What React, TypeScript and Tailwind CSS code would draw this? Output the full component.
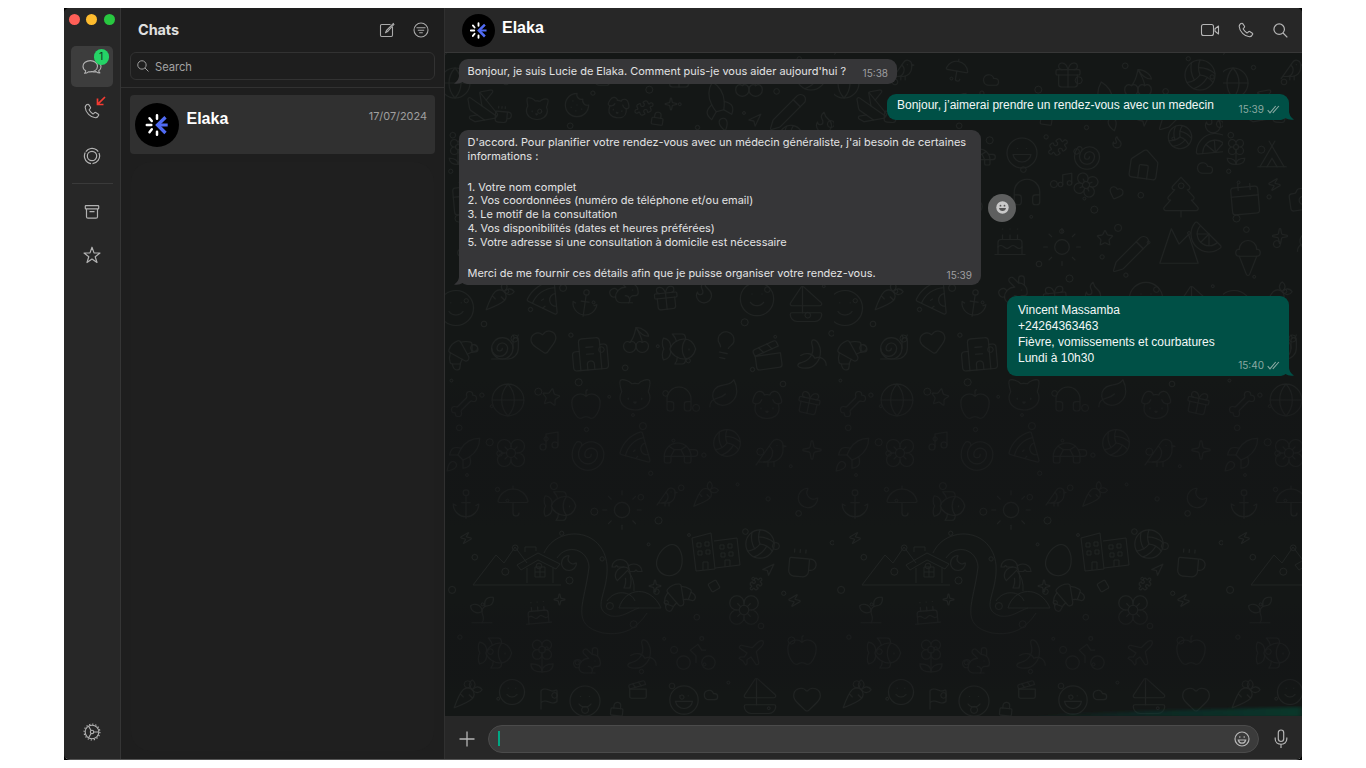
import React from "react";
import {
  Anchor, Apple, Banana, Bike, Bird, Bone, Building2, Cake, Calendar, Camera, Carrot, Cat, Cherry, Citrus,
  Clapperboard, Cloud, Coffee, Cookie, Croissant, Diamond, Dog, Egg, Fish, Flag, Flame, Flower, Flower2, Gift,
  Globe, Headphones, Heart, House, IceCreamCone, Laugh, Leaf, Lightbulb, Lock, Moon, Mountain, Music, Navigation,
  Origami, Palmtree, Pencil, Pizza, Plane, Puzzle, Rabbit, Rocket, Sailboat, Shell, Smile, Snail, Sparkle, Sprout,
  Star, Sun, Tent, TreePine, Trophy, Turtle, Umbrella, Volleyball, Zap,
} from "lucide-react";

type Doodle = [React.ElementType, number, number, number, number];

const doodles: Doodle[] = [
  [Globe, -8, 12, 36, 0], [Origami, 18, 34, 38, -10], [Coffee, 48, 52, 20, 5], [Cat, 78, 42, 28, 4],
  [Cookie, 118, 38, 28, 0], [Dog, 160, 42, 26, 10], [Puzzle, 190, 46, 18, 20], [Sparkle, 219, 44, 14, 0],
  [Lock, 205, 58, 15, 8], [Rocket, 252, 32, 44, -60], [Cherry, 288, 14, 32, 0], [Pencil, 322, 38, 42, 0],
  [Navigation, 302, 60, 15, 0], [Gift, 218, 6, 32, 0], [Cloud, 148, 18, 18, 0], [Bird, 56, 4, 26, 0],
  [Umbrella, 110, 4, 26, 10], [Flame, 366, 56, 26, 0], [Volleyball, 348, 4, 36, 0],
  [Flower2, -2, 84, 30, 0], [Tent, 32, 84, 34, 0], [Laugh, 170, 82, 36, 0], [Puzzle, 214, 84, 20, 10],
  [Shell, 238, 90, 30, 0], [Flame, 276, 82, 14, 0], [House, 292, 94, 36, 8], [Volleyball, 332, 70, 28, 12],
  [Citrus, 362, 76, 38, 130], [Trophy, 90, 80, 34, 5], [Turtle, 132, 88, 32, 0],
  [Calendar, 4, 128, 36, -5], [Zap, 44, 124, 15, 15], [Camera, 64, 130, 32, -8], [Bike, 106, 120, 46, 0],
  [Music, 222, 118, 18, 0], [Flower, 238, 118, 28, 20], [Cloud, 362, 106, 18, 0], [TreePine, 322, 118, 50, 0],
  [Headphones, 176, 122, 34, 0], [Heart, 274, 132, 16, 20],
  [IceCreamCone, 4, 184, 42, 0], [Sparkle, 48, 174, 18, 0], [Leaf, 72, 172, 30, 0], [Plane, 110, 180, 38, 0],
  [Cake, 158, 170, 36, 0], [Sun, 206, 172, 44, 0], [Star, 262, 176, 18, 0], [Pencil, 276, 180, 42, 0],
  [Mountain, 322, 170, 46, 0], [Citrus, 354, 166, 36, 0],
  [Smile, -10, 234, 42, 0], [Carrot, 38, 226, 34, 0], [Pizza, 80, 224, 38, 10], [Anchor, 124, 234, 32, 8],
  [Rabbit, 162, 220, 34, 0], [Gift, 206, 230, 30, -6], [Flame, 246, 226, 26, 0], [Smile, 292, 226, 40, 0],
  [Sailboat, 340, 230, 42, 0],
  [Croissant, 0, 284, 36, 0], [Snail, 44, 278, 32, 0], [Heart, 84, 274, 30, -10], [Building2, 124, 280, 42, -5],
  [Cherry, 176, 272, 30, 0], [Fish, 214, 276, 40, 0], [Lightbulb, 264, 276, 32, 12], [Clapperboard, 306, 286, 34, -8],
  [Banana, 350, 284, 34, 0],
  [Bone, 4, 336, 30, 0], [Globe, 44, 328, 38, 0], [Star, 96, 334, 20, 10], [Apple, 124, 334, 34, 0],
  [Cat, 170, 322, 40, 0], [Headphones, 218, 330, 32, 0], [Leaf, 262, 324, 34, 0], [Dog, 304, 334, 36, 0],
  [Gift, 350, 336, 28, 12],
  [Rocket, -2, 382, 40, 0], [Flower, 48, 382, 36, 0], [Music, 92, 376, 24, 0], [Shell, 124, 384, 38, 0],
  [Pizza, 172, 376, 36, 0], [Turtle, 216, 380, 40, 0], [Volleyball, 266, 374, 32, 0], [Bird, 308, 382, 36, 0],
  [Sparkle, 356, 386, 22, 0],
  [Anchor, 4, 434, 34, 0], [Umbrella, 50, 430, 36, 0], [Fish, 96, 434, 38, 0], [Sun, 154, 434, 46, 0],
  [Bird, 210, 432, 24, 0], [Carrot, 246, 426, 30, 0], [Moon, 350, 432, 26, 0],
  [Zap, 14, 478, 14, 15], [Moon, 114, 500, 20, 0],
  [Palmtree, 164, 502, 36, 0], [Egg, 206, 488, 38, 15], [Volleyball, 298, 474, 34, 0],
  [Coffee, 340, 494, 34, 5], [Navigation, 316, 510, 14, 0], [Sparkle, 203, 526, 14, 0],
  [Puzzle, 304, 524, 14, 0], [Diamond, 262, 526, 14, 15],
  [Sprout, 20, 540, 34, 0], [Cake, 78, 544, 30, -5], [Sparkle, 108, 540, 13, 0],
  [Croissant, 216, 528, 36, 20], [Flower, 280, 538, 38, 0], [Zap, 342, 540, 15, 15],
  [Fish, 30, 580, 40, 0], [Flower2, 78, 584, 38, 0], [Rabbit, 126, 592, 32, 0], [Banana, 180, 584, 34, 0],
  [Bike, 228, 576, 46, 0], [Plane, 290, 584, 32, 0], [Apple, 340, 580, 34, 0],
  [Smile, 52, 624, 30, 0], [Flag, 92, 634, 24, 0], [Smile, 122, 630, 36, 0], [Lock, 164, 648, 16, 6],
  [Clapperboard, 182, 626, 22, 0], [Laugh, 222, 630, 34, 0], [Cloud, 258, 634, 16, 0], [Sailboat, 294, 622, 42, 0],
  [Heart, 346, 630, 32, 0], [Carrot, 6, 624, 34, 0],
];

const dots = Array.from({ length: 140 }, (_, i) => ({
  x: (i * 83.7 + (i % 7) * 11) % 388,
  y: (i * 51.3 + (i % 5) * 7) % 664,
  r: 1.4 + (i % 4) * 0.7,
}));

function Wallpaper() {
  return (
    <svg className="absolute inset-0 h-full w-full" aria-hidden="true">
      <defs>
        <pattern id="doodles" width="389" height="664" patternUnits="userSpaceOnUse">
          <g color="#202322" fill="none" stroke="#202322">
            {doodles.map(([Icon, x, y, s, r], i) => (
              <g key={i} transform={`translate(${x} ${y}) rotate(${r} ${s / 2} ${s / 2})`}>
                <Icon size={s} strokeWidth={(1.1 * 24) / s} />
              </g>
            ))}
            {dots.map((d, i) => (
              <circle key={i} cx={d.x} cy={d.y} r={d.r} />
            ))}
            <path d="M28 532L51 502L59 510L70 494L82 510M28 532H116M72 512L93 500L115 511L111 516L93 507L76 517ZM82 515V530M108 515V530M90 514H100V524H90ZM95 514V524M90 519H100M80 499V494H91V498" />
            <path d="M99 500C112 472 158 474 162 512C164 540 145 556 166 563C178 565 184 558 194 555M112 505C122 490 143 496 144 514C140 550 124 572 158 580C180 583 192 575 202 560" />
            <path d="M162 548C170 536 186 538 190 548M174 555C180 534 206 532 216 555ZM189 538Q190 526 183 518" />
            <path d="M247 485L266 480L270 516L251 518ZM269 488L292 485L295 512L270 515M252 490h4v4h-4zM260 489h4v4h-4zM253 498h4v4h-4zM261 497h4v4h-4zM275 492h4v4h-4zM283 491h4v4h-4zM276 500h4v4h-4zM284 499h4v4h-4zM258 517V509H263V516M280 514V507H285V513" />
          </g>
        </pattern>
        <linearGradient id="tint" x1="0" x2="1">
          <stop offset="0" stopColor="#004e43" stopOpacity="0" />
          <stop offset="0.6" stopColor="#00493c" stopOpacity="0.4" />
          <stop offset="1" stopColor="#00593f" stopOpacity="0.5" />
        </linearGradient>
        <linearGradient id="shade" x1="0" y1="0" x2="0" y2="1">
          <stop offset="0" stopColor="#131416" stopOpacity="0" />
          <stop offset="0.2" stopColor="#131416" stopOpacity="0.4" />
          <stop offset="0.8" stopColor="#131416" stopOpacity="0.4" />
          <stop offset="1" stopColor="#131416" stopOpacity="0" />
        </linearGradient>
        <filter id="soft"><feGaussianBlur stdDeviation="3 1.5" /></filter>
      </defs>
      <rect width="100%" height="100%" fill="url(#doodles)" />
      <rect y="325" width="857" height="150" fill="url(#shade)" />
      <rect y="550" width="857" height="90" fill="url(#shade)" />
      <path d="M560 664L700 658L857 654V664Z" fill="url(#tint)" filter="url(#soft)" />
    </svg>
  );
}

function Logo({ size }: { size: number }) {
  return (
    <svg width={size} height={size} viewBox="0 0 44 44" className="shrink-0" fill="none">
      <circle cx="22" cy="22" r="22" fill="#000" />
      <path d="M11.800 22H16.300M22 12.300V15.700M22 28.700V31.800M14.500 15.200L16.800 18M14.500 29.200L16.800 26.300" stroke="#fff" strokeWidth="2.500" strokeLinecap="round" />
      <path d="M30.500 14.200L22.500 22L30.500 30" stroke="#506bf4" strokeWidth="3.300" />
      <path d="M22.500 22H32.700" stroke="#506bf4" strokeWidth="2.800" />
    </svg>
  );
}

function Ticks() {
  return (
    <svg width="13" height="9" viewBox="0 0 13 9" fill="none" stroke="#8aa9a2" strokeWidth="1.100">
      <path d="M.7 5.200L3 7.800L8.700 1M5.800 7.800L11.900 1" />
    </svg>
  );
}

function Tail({ side }: { side: "left" | "right" }) {
  return side === "left" ? (
    <svg width="14" height="14" viewBox="0 0 14 14" className="absolute bottom-0 -left-[5px]">
      <path d="M5 0V6Q4.500 11 0 13.500Q5 14.500 8.500 12L14 14V0Z" fill="#363638" />
    </svg>
  ) : (
    <svg width="14" height="14" viewBox="0 0 14 14" className="absolute bottom-0 -right-[5px]">
      <path d="M9 0V6Q9.500 11 14 13.500Q9 14.500 5.500 12L0 14V0Z" fill="#005046" />
    </svg>
  );
}

function Phone() {
  return (
    <svg width="16" height="16" viewBox="0 0 16 16" fill="none" stroke="currentColor" strokeWidth="1.100" strokeLinejoin="round">
      <path d="M3.700 1.300C2.500 1.700 1.200 2.900 1.200 4.500C1.500 9.300 6.600 14.400 11.400 14.800C13 14.700 14.200 13.500 14.700 12.300C14.900 11.800 14.700 11.500 14.400 11.300L11.700 9.500C11.300 9.300 10.900 9.300 10.600 9.600L9.700 10.600C9.400 10.900 9 10.900 8.700 10.700C7.300 9.800 6.200 8.700 5.300 7.300C5.100 7 5.100 6.600 5.400 6.300L6.400 5.400C6.700 5.100 6.700 4.700 6.500 4.300L4.700 1.600C4.500 1.300 4.200 1.100 3.700 1.300Z" />
    </svg>
  );
}

function Search({ size }: { size: number }) {
  return (
    <svg width={size} height={size} viewBox="0 0 16 16" fill="none" stroke="currentColor" strokeWidth="1.300">
      <circle cx="6.600" cy="6.600" r="5.600" />
      <path d="M10.700 10.700L15.300 15.300" />
    </svg>
  );
}

function Sidebar() {
  return (
    <aside className="flex w-[57px] shrink-0 flex-col items-center border-r border-[#353535] bg-[#272727] text-[#b2b2b2]">
      <div className="flex w-full gap-[6.300px] pt-[6px] pl-[5px]">
        <span className="size-[11px] rounded-full bg-[#ff5f57]" />
        <span className="size-[11px] rounded-full bg-[#febc2e]" />
        <span className="size-[11px] rounded-full bg-[#28c840]" />
      </div>
      <div className="relative mt-[21px] flex h-[41px] w-[42px] items-center justify-center rounded-[5px] bg-[#3d3d3d]">
        <svg width="20" height="16" viewBox="0 0 20 16" fill="none" stroke="currentColor" strokeWidth="1.100" strokeLinejoin="round">
          <path d="M8.300 1.600C4.200 1.600 1 4.100 1 7.200C1 9.200 2 10.800 3.700 11.800C3.700 12.900 3.200 13.700 2.500 14.300C4.100 14.300 5.500 13.700 6.400 12.800C11.600 13.400 15.500 11 15.500 7.200C15.500 4.100 12.300 1.600 8.300 1.600Z" />
          <path d="M15 3.200C17.500 4 19 5.600 19 7.700C19 9.400 18.100 10.900 16.700 11.700C16.800 12.800 17.300 13.500 17.900 14C16.400 14 15 13.500 14.100 12.600C12.400 13 10.300 12.900 8.800 12.500" />
        </svg>
        <span className="absolute top-[3px] left-[22.500px] flex size-[15.500px] items-center justify-center rounded-full bg-[#25d366] font-[Inter,sans-serif] text-[10.500px] leading-none text-[#10391f]">1</span>
      </div>
      <div className="relative mt-[16px] flex h-[16px] justify-center">
        <Phone />
        <svg width="10" height="10" viewBox="0 0 10 10" fill="none" stroke="#f43b32" strokeWidth="1.700" className="absolute -top-[7px] left-[12px]">
          <path d="M9 1L1.600 8.400M1.500 2.500V8.500H7.500" />
        </svg>
      </div>
      <svg className="mt-[28px]" width="18" height="18" viewBox="0 0 18 18" fill="none" stroke="currentColor" strokeWidth="1.200">
        <circle cx="9" cy="9" r="4.700" />
        <circle cx="9" cy="9" r="7.600" strokeDasharray="14.400 1.517" transform="rotate(-144 9 9)" />
      </svg>
      <div className="mt-[18px] h-px w-[41px] bg-[#3a3a3a]" />
      <svg className="mt-[20px]" width="16" height="16" viewBox="0 0 16 16" fill="none" stroke="currentColor" strokeWidth="1.200" strokeLinejoin="round">
        <rect x="1.300" y="1.700" width="13.400" height="3.200" rx=".6" />
        <path d="M2.500 5V12.700Q2.500 14.200 4 14.200H12Q13.500 14.200 13.500 12.700V5M5.500 7.600H10.500" />
      </svg>
      <svg className="mt-[26px]" width="18" height="18" viewBox="0 0 18 18" fill="none" stroke="currentColor" strokeWidth="1.200" strokeLinejoin="round">
        <path d="M9 1.200L11 6.900L17 7L12.200 10.700L14 16.500L9 13L4 16.500L5.800 10.700L1 7L7 6.900Z" />
      </svg>
      <svg className="mt-auto mb-[18px]" width="18" height="18" viewBox="0 0 18 18" fill="none" stroke="currentColor" strokeWidth="1.100">
        <circle cx="9" cy="9" r="6.800" />
        <circle cx="9" cy="9" r="7.900" strokeWidth="1.200" strokeDasharray="1.300 1.800" />
        <circle cx="9" cy="9" r="1.700" />
        <path d="M10.700 9H15.800M8.100 7.500L5.600 3.200M8.100 10.500L5.600 14.800" />
      </svg>
    </aside>
  );
}

function ChatList() {
  return (
    <section className="flex w-[324px] shrink-0 flex-col border-r border-[#303030] bg-[#1e1e1e] font-[Inter,sans-serif]">
      <header className="flex h-[44px] items-center pr-[15px] pl-[17px] text-[#a9a9a9]">
        <h1 className="mr-auto text-[14.500px] font-bold tracking-[-0.100px] text-[#e0e0e0]">Chats</h1>
        <svg width="16" height="16" viewBox="0 0 16 16" fill="none" stroke="currentColor" strokeWidth="1.100" strokeLinejoin="round">
          <path d="M11.500 2.500H2.700Q1.500 2.500 1.500 3.700V13.300Q1.500 14.500 2.700 14.500H12.300Q13.500 14.500 13.500 13.300V5M14.700 1.200L7.500 8.500L6.500 10.700L8.600 9.600L15.300 2" />
        </svg>
        <svg className="ml-[18px]" width="16" height="16" viewBox="0 0 16 16" fill="none" stroke="currentColor" strokeWidth="1.100">
          <circle cx="8" cy="8" r="7" />
          <path d="M3.500 5.700H12.500M4.800 8.200H11.200M6.200 10.700H9.800" />
        </svg>
      </header>
      <div className="mx-[9px] flex h-[28px] items-center gap-[6px] rounded-[6px] border border-[#323232] pl-[6px] text-[#a2a2a2]">
        <Search size={12} />
        <span className="pt-[2px] text-[11.200px] tracking-[-0.050px]">Search</span>
      </div>
      <div className="mt-[7px] h-px bg-[#313131]" />
      <div className="mx-[9px] mt-[7px] flex h-[59px] rounded-[4px] bg-[#303030] pt-[8px] pr-[8px] pl-[5px]">
        <Logo size={44} />
        <h2 className="ml-[7.500px] flex-1 pt-[6px] font-['Liberation_Sans',sans-serif] text-[16px] leading-[20px] font-bold text-white">Elaka</h2>
        <time className="pt-[6px] text-[10.900px] leading-[14px] text-[#a0a0a0]">17/07/2024</time>
      </div>
      <div className="mx-[10px] mt-[8px] mb-[8px] flex-1 rounded-[20px] bg-[#1f1f1f]" />
    </section>
  );
}

const incoming = "relative rounded-[9px] bg-[#363638] pl-[8.500px] font-[Inter,sans-serif] text-[10.980px] leading-[13.800px] text-[#e2e2e3]";
const outgoing = "relative self-end rounded-[9px] bg-[#005046] font-['Liberation_Sans',sans-serif] text-[12px] leading-[16px] text-[#f2f7f6]";

function Conversation() {
  return (
    <main className="flex min-w-0 flex-1 flex-col bg-[#141716]">
      <header className="flex h-[45px] shrink-0 items-center border-b border-[#373737] bg-[#272727] pr-[14px] pl-[17px] text-[#b5b5b5]">
        <Logo size={33} />
        <h2 className="mr-auto mb-[4px] ml-[7px] font-['Liberation_Sans',sans-serif] text-[16px] leading-[20px] font-bold text-white">Elaka</h2>
        <svg width="20" height="14" viewBox="0 0 20 14" fill="none" stroke="currentColor" strokeWidth="1.100" strokeLinejoin="round">
          <rect x="1.500" y="1.500" width="12" height="11" rx="2" />
          <path d="M15 5.700L18.500 3V11L15 8.300Z" />
        </svg>
        <span className="ml-[18px]"><Phone /></span>
        <span className="ml-[19px]"><Search size={15} /></span>
      </header>
      <div className="relative flex min-h-0 flex-1 flex-col items-start pt-[6px] pr-[13px] pl-[14px]">
        <Wallpaper />
        <div className={`${incoming} h-[25px] w-[438px]`}>
          <Tail side="left" />
          <div className="relative flex justify-between pt-[6px] pr-[9px]">
            <p className="whitespace-nowrap">Bonjour, je suis Lucie de Elaka. Comment puis-je vous aider aujourd'hui ?</p>
            <time className="pt-[2px] text-[10px] text-[#9f9fa1]">15:38</time>
          </div>
        </div>
        <div className={`${outgoing} mt-[10px] h-[26px] w-[402px]`}>
          <Tail side="right" />
          <div className="relative flex pt-[3px] pr-[9px] pl-[10px]">
            <p className="mr-auto whitespace-nowrap">Bonjour, j’aimerai prendre un rendez-vous avec un medecin</p>
            <span className="flex items-center gap-[3px] pt-[7px] font-[Inter,sans-serif] text-[10px] leading-[10px] text-[#8aa9a2]">15:39 <Ticks /></span>
          </div>
        </div>
        <div className="mt-[10px] flex items-center gap-[7px]">
          <div className={`${incoming} h-[155px] w-[522px]`}>
            <Tail side="left" />
            <div className="relative whitespace-nowrap pt-[6px]">
              <p>D'accord. Pour planifier votre rendez-vous avec un médecin généraliste, j'ai besoin de certaines<br />informations :</p>
              <ol className="mt-[17px]">
                <li>1. Votre nom complet</li>
                <li>2. Vos coordonnées (numéro de téléphone et/ou email)</li>
                <li>3. Le motif de la consultation</li>
                <li>4. Vos disponibilités (dates et heures préférées)</li>
                <li>5. Votre adresse si une consultation à domicile est nécessaire</li>
              </ol>
              <div className="mt-[17px] flex justify-between pr-[9px]">
                <p>Merci de me fournir ces détails afin que je puisse organiser votre rendez-vous.</p>
                <time className="pt-[2px] text-[10px] text-[#9f9fa1]">15:39</time>
              </div>
            </div>
          </div>
          <div className="relative flex size-[28px] items-center justify-center rounded-full bg-[#5e5f5f]">
            <svg width="13" height="13" viewBox="0 0 13 13">
              <circle cx="6.500" cy="6.500" r="6.200" fill="#c9c9c9" />
              <circle cx="4.500" cy="4.700" r=".9" fill="#555" />
              <circle cx="8.500" cy="4.700" r=".9" fill="#555" />
              <path d="M3 7H10Q9.500 10 6.500 10T3 7Z" fill="#555" />
            </svg>
          </div>
        </div>
        <div className={`${outgoing} mt-[11px] flex h-[80px] w-[282px] pt-[6px] pr-[9px] pl-[11px]`}>
          <Tail side="right" />
          <p className="relative mr-auto whitespace-nowrap">Vincent Massamba<br />+24264363463<br />Fièvre, vomissements et courbatures<br />Lundi à 10h30</p>
          <span className="relative mb-[6px] flex items-center gap-[3px] self-end font-[Inter,sans-serif] text-[10px] leading-[10px] text-[#8aa9a2]">15:40 <Ticks /></span>
        </div>
      </div>
      <footer className="flex h-[43px] shrink-0 items-center bg-[#272727] pr-[14px] pl-[14px] text-[#b5b5b5]">
        <svg className="mt-[2px]" width="16" height="16" viewBox="0 0 16 16" stroke="currentColor" strokeWidth="1.300"><path d="M8 .5V15.500M.5 8H15.500" /></svg>
        <div className="mt-[2px] ml-[13px] flex h-[28px] flex-1 items-center rounded-full border border-[#4b4b4b] bg-[#3b3b3b] pr-[8px] pl-[9px]">
          <span className="mr-auto h-[15px] w-[2px] bg-[#00a884]" />
          <svg width="16" height="16" viewBox="0 0 16 16" fill="none" stroke="#b7b7b7" strokeWidth="1.200">
            <circle cx="8" cy="8" r="7" />
            <path d="M4.300 9H11.700Q11 12.200 8 12.200T4.300 9Z" />
            <circle cx="5.800" cy="6" r=".8" fill="#b7b7b7" stroke="none" />
            <circle cx="10.200" cy="6" r=".8" fill="#b7b7b7" stroke="none" />
          </svg>
        </div>
        <svg className="mt-[2px] ml-[15px]" width="14" height="20" viewBox="0 0 14 20" fill="none" stroke="currentColor" strokeWidth="1.200">
          <rect x="4.300" y="1" width="5.400" height="11.500" rx="2.700" />
          <path d="M1.200 8.500V10C1.200 17 12.800 17 12.800 10V8.500M7 15.300V19" />
        </svg>
      </footer>
    </main>
  );
}

export default function App() {
  return (
    <div className="h-[768px] w-[1366px] overflow-hidden bg-white pt-[8px] pl-[64px]">
      <div className="h-[752px] w-[1238px] bg-black">
        <div className="flex h-[752px] w-[1238px] overflow-hidden rounded-t-[5px] rounded-b-[6px] border-b border-[#555]">
          <Sidebar />
          <ChatList />
          <Conversation />
        </div>
      </div>
    </div>
  );
}
